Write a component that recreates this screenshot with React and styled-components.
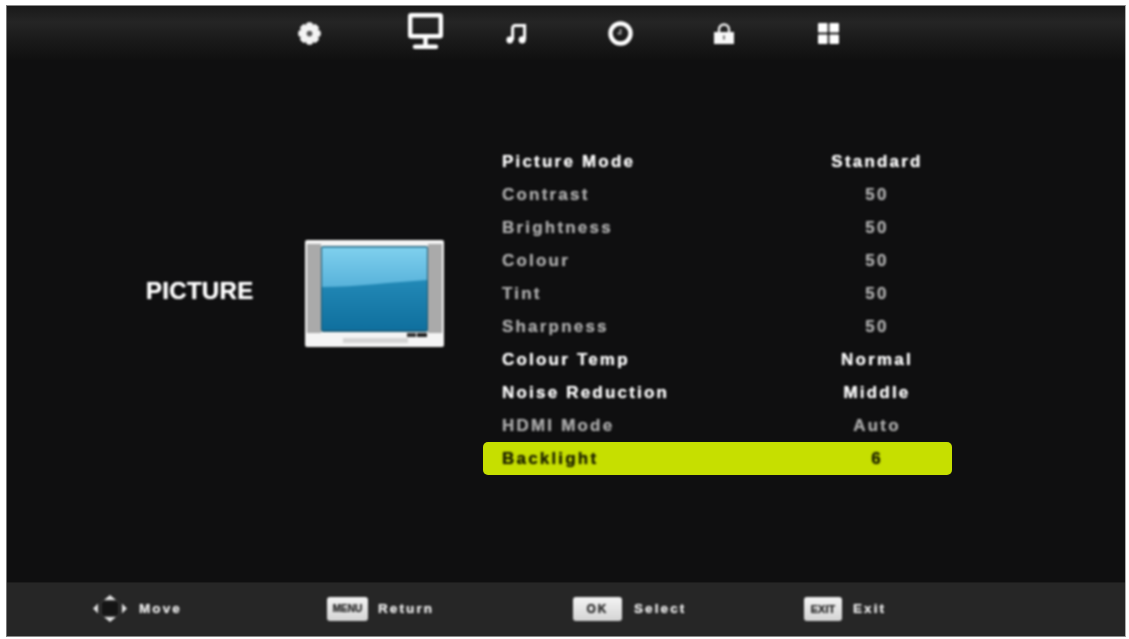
import React from 'react';
import styled, { createGlobalStyle } from 'styled-components';

const Global = createGlobalStyle`
  html, body { margin: 0; padding: 0; background: #fff; }
  body { width: 1129px; height: 639px; overflow: hidden; font-family: "Liberation Sans", Arial, sans-serif; }
`;
const Page = styled.div`
  width: 1129px; height: 639px; box-sizing: border-box;
  padding: 5px 3px 2px 6px;
  display: flex;
`;
const Screen = styled.div`
  flex: 1; display: flex; flex-direction: column;
  background: #0f0f10;
  border: 1px solid #8a8a8a; border-left-color: #777; border-right-color: #aaa;
`;
const TopBar = styled.div`
  height: 54px; flex-shrink: 0;
  background: linear-gradient(#191919 0%, #252525 30%, #1b1b1b 60%, #101010 100%);
  display: flex;
  padding-left: 291px;
  align-items: center;
`;
const IconSlot = styled.div`
  margin-left: ${p => p.$gap}px; margin-top: ${p => p.$up ? -4 : 0}px;
  display: flex; filter: blur(.8px);
`;
const Content = styled.div`
  flex: 1; display: flex; align-items: flex-start;
`;
const Title = styled.div`
  width: 298px; margin-top: 217px; box-sizing: border-box; padding-left: 139px;
  color: #fff; font-weight: 700; font-size: 24px; letter-spacing: .3px; line-height: 28px;
  text-shadow: 0 0 1px #fff;
  filter: blur(.8px);
`;
const TvWrap = styled.div`
  width: 178px; margin-top: 180px; flex-shrink: 0; filter: blur(.8px);
`;
const Menu = styled.div`
  width: 470px; margin-top: 85px; display: flex; flex-direction: column;
`;
const Row = styled.div`
  height: 33px; display: grid; grid-template-columns: 300px 150px;
  padding-left: 19px; align-items: center;
  font-size: 17px; font-weight: 700; letter-spacing: 2.2px;
  color: ${p => (p.$dim ? '#a8a8a8' : '#fafafa')};
  text-shadow: 0 0 1px currentColor;
`;
const SelectedRow = styled(Row)`
  color: #1f2400; background: #c6df00; border-radius: 5px;
  width: 469px; box-sizing: border-box;
`;
const Label = styled.span`white-space: nowrap; filter: blur(.8px);`;
const Value = styled.span`text-align: center; white-space: nowrap; filter: blur(.8px);`;
const BottomBar = styled.div`
  flex: 1; max-height: 54px; min-height: 54px; background: #262626; border-top: 1px solid #1c1c1c;
  box-sizing: border-box; margin-top: auto;
  display: flex; align-items: center;
  padding-left: 86px;
`;
const Hint = styled.div`
  display: flex; align-items: center; gap: ${p => p.$gap}px; width: ${p => p.$w}px;
  color: #e4e4e4; font-weight: 700; font-size: 13.5px; letter-spacing: 2.1px;
  text-shadow: 0 0 1px currentColor;
  filter: blur(.8px); margin-top: -2px;
`;
const Key = styled.span`
  display: inline-flex; align-items: center; justify-content: center;
  width: ${p => p.$w}px; height: 24px; border-radius: 3px;
  background: linear-gradient(#f4f4f4, #d4d4d4);
  color: #333; font-size: ${p => p.$fs}px; font-weight: 700; letter-spacing: ${p => p.$ls}px;
`;

const teeth = [0, 45, 90, 135, 180, 225, 270, 315];
const Gear = () => (
  <svg width="23" height="23" viewBox="0 0 24 24">
    {teeth.map(a => (
      <rect key={a} x="8.6" y="0.5" width="6.8" height="23" rx="2.2" fill="#f4f4f4" transform={`rotate(${a} 12 12)`} />
    ))}
    <circle cx="12" cy="12" r="8" fill="#f4f4f4" />
    <circle cx="12" cy="12" r="3" fill="#555" />
  </svg>
);
const Monitor = () => (
  <svg width="35" height="36" viewBox="0 0 35 36" fill="none" stroke="#fff" strokeWidth="4.4">
    <rect x="2.2" y="2.2" width="30.6" height="21" rx="1" />
    <path d="M17.5 24v8" />
    <path d="M7 33.8h21" strokeLinecap="round" />
  </svg>
);
const Music = () => (
  <svg width="22" height="21" viewBox="0 0 22 21" fill="none" stroke="#fff" strokeWidth="3">
    <path d="M6.6 17V5a2.5 2.5 0 0 1 2.5-2.5h9.5V16.5" />
    <circle cx="3.8" cy="17" r="3.4" fill="#fff" strokeWidth="0" />
    <circle cx="16.2" cy="16.8" r="3.6" fill="#fff" strokeWidth="0" />
  </svg>
);
const Clock = () => (
  <svg width="25" height="25" viewBox="0 0 25 25" fill="none">
    <circle cx="12.5" cy="12.5" r="10" stroke="#fff" strokeWidth="4.4" />
    <path d="M12.5 8v4.5H9.5" stroke="#aaa" strokeWidth="1.8" />
  </svg>
);
const Lock = () => (
  <svg width="20" height="21" viewBox="0 0 20 21">
    <path d="M5 10V6.5a5 5 0 0 1 10 0V10" fill="none" stroke="#eee" strokeWidth="2.4" />
    <rect x="0" y="9" width="20" height="12" fill="#f8f8f8" />
    <rect x="9" y="12.5" width="2" height="4" fill="#777" />
  </svg>
);
const Grid = () => (
  <svg width="21" height="21" viewBox="0 0 21 21" fill="#fff">
    <rect x="0" y="0" width="9.6" height="9.6" rx="1" />
    <rect x="11.4" y="0" width="9.6" height="9.6" rx="1" />
    <rect x="0" y="11.4" width="9.6" height="9.6" rx="1" />
    <rect x="11.4" y="11.4" width="9.6" height="9.6" rx="1" />
  </svg>
);
const Tv = () => (
  <svg width="139" height="107" viewBox="0 0 139 107">
    <defs>
      <linearGradient id="up" x1="0" y1="0" x2="0" y2="1">
        <stop offset="0" stopColor="#7fd0ee" />
        <stop offset="1" stopColor="#58b2da" />
      </linearGradient>
      <linearGradient id="low" x1="0" y1="0" x2="0" y2="1">
        <stop offset="0" stopColor="#2f9ac6" />
        <stop offset="1" stopColor="#0f6f9e" />
      </linearGradient>
    </defs>
    <rect x="0" y="0" width="139" height="107" rx="2" fill="#f4f4f4" />
    <rect x="2" y="4" width="14" height="89" fill="#aaa" />
    <rect x="123" y="4" width="14" height="89" fill="#aaa" />
    <rect x="16" y="6" width="107" height="86" rx="2" fill="#1d5870" />
    <rect x="17" y="7.5" width="105" height="83" rx="1" fill="url(#low)" />
    <path d="M17 8.5a1 1 0 0 1 1-1h103a1 1 0 0 1 1 1V40c-35 2-70 7-105 7z" fill="url(#up)" />
    <rect x="38" y="98" width="65" height="5" fill="#d4d4d4" />
    <rect x="102" y="93" width="9" height="4" fill="#333" />
    <rect x="112" y="93" width="10" height="4" fill="#222" />
  </svg>
);
const Pad = () => (
  <svg width="34" height="27" viewBox="0 0 34 27" fill="#e4e4e4">
    <path d="M17 0l6 5H11zM17 27l6-5H11zM0 13.5l5-5v10zM34 13.5l-5-5v10z" />
    <rect x="8" y="6" width="18" height="15" rx="2" fill="#141414" stroke="#444" />
  </svg>
);

const rows = [
  ['Picture Mode', 'Standard', false],
  ['Contrast', '50', true],
  ['Brightness', '50', true],
  ['Colour', '50', true],
  ['Tint', '50', true],
  ['Sharpness', '50', true],
  ['Colour Temp', 'Normal', false],
  ['Noise Reduction', 'Middle', false],
  ['HDMI Mode', 'Auto', true],
];

export default function App() {
  return (
    <Page>
      <Global />
      <Screen>
        <TopBar>
          <IconSlot $gap={0}><Gear /></IconSlot>
          <IconSlot $gap={87} $up><Monitor /></IconSlot>
          <IconSlot $gap={63}><Music /></IconSlot>
          <IconSlot $gap={80}><Clock /></IconSlot>
          <IconSlot $gap={81}><Lock /></IconSlot>
          <IconSlot $gap={84}><Grid /></IconSlot>
        </TopBar>
        <Content>
          <Title>PICTURE</Title>
          <TvWrap><Tv /></TvWrap>
          <Menu>
            {rows.map(([l, v, d]) => (
              <Row key={l} $dim={d}><Label>{l}</Label><Value>{v}</Value></Row>
            ))}
            <SelectedRow><Label>Backlight</Label><Value>6</Value></SelectedRow>
          </Menu>
        </Content>
        <BottomBar>
          <Hint $w={234} $gap={12}><Pad />Move</Hint>
          <Hint $w={246} $gap={10}><Key $w={41} $fs={10} $ls={0}>MENU</Key>Return</Hint>
          <Hint $w={231} $gap={12}><Key $w={49} $fs={12} $ls={2}>OK</Key>Select</Hint>
          <Hint $w={150} $gap={11}><Key $w={38} $fs={11} $ls={0}>EXIT</Key>Exit</Hint>
        </BottomBar>
      </Screen>
    </Page>
  );
}
